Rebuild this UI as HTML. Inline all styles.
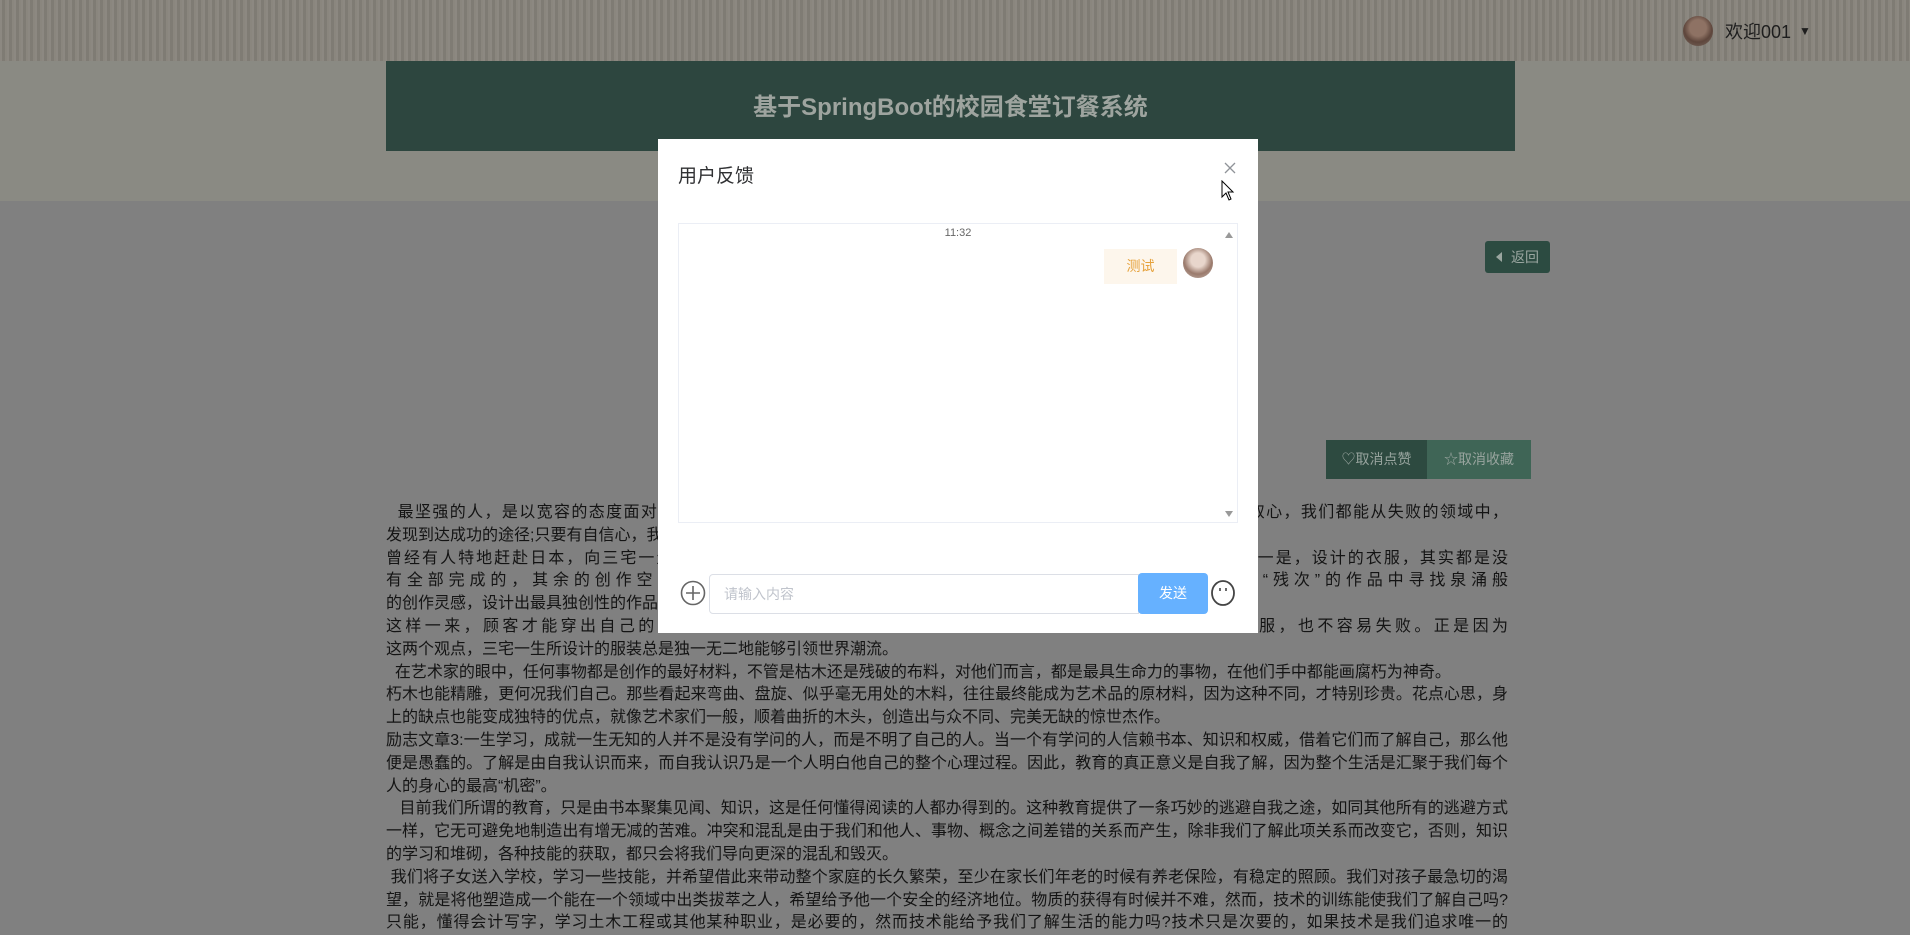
<!DOCTYPE html>
<html><head><meta charset="utf-8">
<style>
*{margin:0;padding:0;box-sizing:border-box}
body{width:1910px;height:918px;overflow:hidden;background:#808080;font-family:"Liberation Sans","Noto Sans CJK SC",sans-serif;position:relative}
.top{position:absolute;left:0;top:0;width:1910px;height:61px;background:#86827a;
background-image:repeating-linear-gradient(90deg,rgba(255,255,255,.05) 0 2px,rgba(0,0,0,.05) 2px 5px,rgba(255,255,255,.03) 5px 7px);}
.band{position:absolute;left:0;top:61px;width:1910px;height:140px;background:#8a8a83}
.hdr{position:absolute;left:386px;top:61px;width:1129px;height:90px;background:#2d463f;color:#9ea49f;font-size:24px;font-weight:bold;text-align:center;line-height:94px}
.welcome{position:absolute;left:1683px;top:15px;height:32px;display:flex;align-items:center;color:#1e1e1e;font-size:18px}
.av{width:30px;height:30px;border-radius:50%;background:radial-gradient(circle at 50% 40%,#8e7264 0 35%,#5e463c 60%,#7a6a60);margin-right:12px}
.back{position:absolute;left:1485px;top:241px;width:65px;height:32px;background:#2c4b41;border-radius:3px;color:#9aa6a0;font-size:14px;line-height:32px;padding-left:26px}
.back:before{content:"";position:absolute;left:11px;top:11px;border-right:6px solid #9aa6a0;border-top:5px solid transparent;border-bottom:5px solid transparent}
.b1{position:absolute;left:1326px;top:440px;width:101px;height:39px;background:#2d4a40;color:#98a49e;font-size:14px;line-height:39px;text-align:center}
.b2{position:absolute;left:1427px;top:440px;width:104px;height:39px;background:#3f6556;color:#98a49e;font-size:14px;line-height:39px;text-align:center}
.txt{position:absolute;left:386px;top:502px;width:1122px;color:#141414;font-size:16px}
.txt div{height:22.8px;line-height:22.8px;white-space:nowrap;overflow:hidden}
.txt .j{text-align:justify;text-align-last:justify}
.modal{position:absolute;left:658px;top:139px;width:600px;height:494px;background:#fff}
.mt{position:absolute;left:20px;top:22px;font-size:19px;color:#303133}
.close{position:absolute;left:565px;top:22px}
.chat{position:absolute;left:20px;top:84px;width:560px;height:300px;border:1px solid #ebeef5}
.time{position:absolute;left:0;width:100%;top:3px;text-align:center;font-size:11px;color:#666}
.bub{position:absolute;left:425px;top:25px;width:73px;height:35px;background:#fdf6ec;color:#e6a23c;font-size:14px;line-height:35px;text-align:center}
.av2{position:absolute;left:504px;top:24px;width:30px;height:30px;border-radius:50%;background:radial-gradient(circle at 50% 40%,#e8d6cc 0 30%,#9a7a6c 60%,#c8b8b0)}
.up{position:absolute;left:546px;top:8px;border-bottom:6px solid #999;border-left:4px solid transparent;border-right:4px solid transparent}
.dn{position:absolute;left:546px;top:287px;border-top:6px solid #999;border-left:4px solid transparent;border-right:4px solid transparent}
.inp{position:absolute;left:51px;top:435px;width:430px;height:40px;border:1px solid #dcdfe6;border-radius:4px 0 0 4px;color:#c0c4cc;font-size:14px;line-height:38px;padding-left:14px}
.send{position:absolute;left:480px;top:434px;width:70px;height:41px;background:#66b1ff;border-radius:4px;color:#fff;font-size:14px;line-height:41px;text-align:center}
</style></head><body>
<div class="top"></div>
<div class="band"></div>
<div class="hdr">基于SpringBoot的校园食堂订餐系统</div>
<div class="welcome"><div class="av"></div>欢迎001<span style="font-size:12px;margin-left:8px">▼</span></div>
<div class="back">返回</div>
<div class="b1">♡取消点赞</div>
<div class="b2">☆取消收藏</div>
<div class="txt">
<div class="j">&nbsp;&nbsp;最坚强的人，是以宽容的态度面对自己的失败，只要有宽容的态度与勇气，又有不屈不挠的毅力和永不满足的进取心，我们都能从失败的领域中，</div>
<div>发现到达成功的途径;只要有自信心，我们就能够在别人看来不可能的地方找到成功的方向。</div>
<div class="j">曾经有人特地赶赴日本，向三宅一生服装设计的成功之道讨教，三宅一生说出了他自己多年来的两个设计观点:一是，设计的衣服，其实都是没</div>
<div class="j">有全部完成的，其余的创作空间，则是留给穿衣服的人自己去完成的，设计师还要努力地从这些“残次”的作品中寻找泉涌般</div>
<div>的创作灵感，设计出最具独创性的作品。</div>
<div class="j">这样一来，顾客才能穿出自己的风格，二是，没有完全完成的衣服，才是真正自由自在而又有个性的衣服，也不容易失败。正是因为</div>
<div>这两个观点，三宅一生所设计的服装总是独一无二地能够引领世界潮流。</div>
<div>&nbsp;&nbsp;在艺术家的眼中，任何事物都是创作的最好材料，不管是枯木还是残破的布料，对他们而言，都是最具生命力的事物，在他们手中都能画腐朽为神奇。</div>
<div class="j">朽木也能精雕，更何况我们自己。那些看起来弯曲、盘旋、似乎毫无用处的木料，往往最终能成为艺术品的原材料，因为这种不同，才特别珍贵。花点心思，身</div>
<div>上的缺点也能变成独特的优点，就像艺术家们一般，顺着曲折的木头，创造出与众不同、完美无缺的惊世杰作。</div>
<div class="j">励志文章3:一生学习，成就一生无知的人并不是没有学问的人，而是不明了自己的人。当一个有学问的人信赖书本、知识和权威，借着它们而了解自己，那么他</div>
<div class="j">便是愚蠢的。了解是由自我认识而来，而自我认识乃是一个人明白他自己的整个心理过程。因此，教育的真正意义是自我了解，因为整个生活是汇聚于我们每个</div>
<div>人的身心的最高“机密”。</div>
<div class="j">&nbsp;&nbsp;&nbsp;目前我们所谓的教育，只是由书本聚集见闻、知识，这是任何懂得阅读的人都办得到的。这种教育提供了一条巧妙的逃避自我之途，如同其他所有的逃避方式</div>
<div class="j">一样，它无可避免地制造出有增无减的苦难。冲突和混乱是由于我们和他人、事物、概念之间差错的关系而产生，除非我们了解此项关系而改变它，否则，知识</div>
<div>的学习和堆砌，各种技能的获取，都只会将我们导向更深的混乱和毁灭。</div>
<div class="j">&nbsp;我们将子女送入学校，学习一些技能，并希望借此来带动整个家庭的长久繁荣，至少在家长们年老的时候有养老保险，有稳定的照顾。我们对孩子最急切的渴</div>
<div class="j">望，就是将他塑造成一个能在一个领域中出类拔萃之人，希望给予他一个安全的经济地位。物质的获得有时候并不难，然而，技术的训练能使我们了解自己吗?</div>
<div class="j">只能，懂得会计写字，学习土木工程或其他某种职业，是必要的，然而技术能给予我们了解生活的能力吗?技术只是次要的，如果技术是我们追求唯一的</div>
</div>
<div class="modal">
<div class="mt">用户反馈</div>
<svg class="close" width="14" height="14" viewBox="0 0 14 14"><path d="M2 2L12 12M12 2L2 12" stroke="#909399" stroke-width="1.3"/></svg>
<svg style="position:absolute;left:563px;top:41px" width="14" height="22" viewBox="0 0 14 22"><path d="M1 1L1 17L5 13L8 20L10 19L7 12L12 12Z" fill="#fff" stroke="#000" stroke-width="1"/></svg>
<div class="chat">
<div class="time">11:32</div>
<div class="bub">测试</div>
<div class="av2"></div>
<div class="up"></div><div class="dn"></div>
</div>
<svg style="position:absolute;left:22px;top:441px" width="26" height="26" viewBox="0 0 26 26"><circle cx="13" cy="13" r="11.5" fill="none" stroke="#666" stroke-width="1.6"/><path d="M13 6V20M6 13H20" stroke="#666" stroke-width="1.6"/></svg>
<div class="inp">请输入内容</div>
<div class="send">发送</div>
<svg style="position:absolute;left:552px;top:440px" width="26" height="28" viewBox="0 0 26 28"><ellipse cx="13" cy="14" rx="11" ry="12" fill="none" stroke="#444" stroke-width="1.8"/><path d="M10 9V12M16 9V12" stroke="#444" stroke-width="1.6"/></svg>
</div>
</body></html>
